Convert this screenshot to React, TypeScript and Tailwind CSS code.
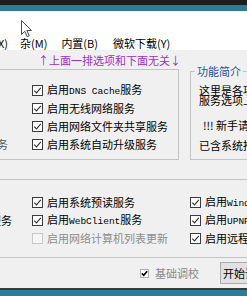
import React from 'react';

function Check({ on = true, disabled = false }: { on?: boolean; disabled?: boolean }) {
  return (
    <span
      className={`flex h-[11px] w-[11px] shrink-0 items-center justify-center border ${
        disabled ? 'border-[#c8c8c8] bg-[#f6f6f6]' : 'border-[#3c3c3c] bg-white'
      }`}
    >
      {on && (
        <svg width="9" height="9" viewBox="0 0 9 9">
          <path d="M1.3 4.7 L3.5 6.9 L7.8 1.9" fill="none" stroke="#333" strokeWidth="1.1" />
        </svg>
      )}
    </span>
  );
}

function Opt({ children, on = true, disabled = false }: { children: React.ReactNode; on?: boolean; disabled?: boolean }) {
  return (
    <div className="flex items-center gap-[4px] whitespace-nowrap">
      <Check on={on} disabled={disabled} />
      <span className={disabled ? 'text-[#8d8d8d]' : 'text-black'}>{children}</span>
    </div>
  );
}

// latin words inside the labels use a narrow mono face like the original
const M = ({ children }: { children: React.ReactNode }) => (
  <span className="font-['Liberation_Mono',monospace] text-[9.5px]">{children}</span>
);

// text whose start is cut off by the left edge of the window
const Cut = ({ w, children }: { w: string; children: React.ReactNode }) => (
  <div className={`flex shrink-0 justify-end overflow-hidden whitespace-nowrap ${w}`}>
    <span>{children}</span>
  </div>
);

export default function App() {
  return (
    <div className="flex h-[296px] w-[247px] flex-col overflow-hidden bg-[#f0f0f0] font-['Noto_Sans_CJK_SC',sans-serif] text-[11px] leading-[14px] text-black">
      {/* window frame */}
      <div className="h-[5px] shrink-0 bg-[#1e1e1e]" />
      <div className="h-[6px] shrink-0 bg-[#2c7c95]" />
      <div className="relative h-[25px] shrink-0 bg-white">
        <svg className="absolute left-[21px] top-[9px]" width="12" height="18" viewBox="0 0 12 18">
          <path
            d="M0.5 0.5 V14.5 L3.8 11.3 L6.2 16.8 L8.3 15.9 L5.9 10.5 H10.5 Z"
            fill="#fff"
            stroke="#4a4a4a"
            strokeWidth="1"
            strokeLinejoin="round"
          />
        </svg>
      </div>

      {/* menu */}
      <div className="flex h-[14px] shrink-0 items-center whitespace-nowrap bg-white">
        <Cut w="w-[8px]">(X)</Cut>
        <span className="ml-[12px]">杂(M)</span>
        <span className="ml-[14px]">内置(B)</span>
        <span className="ml-[15px]">微软下载(Y)</span>
      </div>

      <div className="flex h-[19px] shrink-0 items-center whitespace-nowrap pl-[38px] text-[#9b30c8]">
        ↑上面一排选项和下面无关↓
      </div>

      {/* upper groups */}
      <div className="flex shrink-0 items-start">
        <div className="-ml-[2px] h-[91px] w-[181px] shrink-0 border border-[#c4c4c4] pt-[11px]">
          <div className="flex h-[18px] items-center">
            <div className="w-[9px] shrink-0" />
            <div className="ml-[24px]">
              <Opt>启用<M>DNS Cache</M>服务</Opt>
            </div>
          </div>
          <div className="flex h-[18px] items-center">
            <div className="w-[9px] shrink-0" />
            <div className="ml-[24px]">
              <Opt>启用无线网络服务</Opt>
            </div>
          </div>
          <div className="flex h-[18px] items-center">
            <div className="w-[9px] shrink-0" />
            <div className="ml-[24px]">
              <Opt>启用网络文件夹共享服务</Opt>
            </div>
          </div>
          <div className="flex h-[18px] items-center">
            <Cut w="w-[9px] text-[#555]">打印服务</Cut>
            <div className="ml-[24px]">
              <Opt>启用系统自动升级服务</Opt>
            </div>
          </div>
        </div>

        <fieldset className="-mt-[5px] ml-[11px] h-[96px] w-[80px] min-w-0 shrink-0 border border-[#c4c4c4] pl-[4px]">
          <legend className="px-[2px] leading-[14px] text-[#1f52a3]">功能简介</legend>
          <div className="mt-[7px] whitespace-nowrap pl-[4px] leading-[10px]">
            <div>这里是各项功能的说明</div>
            <div>服务选项上停留查看</div>
          </div>
          <div className="mt-[13px] whitespace-nowrap pl-[8px]">!!! 新手请保持默认</div>
          <div className="mt-[6px] whitespace-nowrap pl-[4px]">已含系统推荐设置</div>
        </fieldset>
      </div>

      <div className="h-[19px] shrink-0" />

      {/* lower group */}
      <div className="-mx-[2px] h-[79px] shrink-0 border border-[#c4c4c4] pt-[13px]">
        <div className="flex h-[18px] items-center">
          <div className="w-[13px] shrink-0" />
          <div className="ml-[20px] w-[158px] shrink-0">
            <Opt>启用系统预读服务</Opt>
          </div>
          <Opt>启用<M>Windows Search</M>服务</Opt>
        </div>
        <div className="flex h-[18px] items-center">
          <Cut w="w-[13px]">启用打印服务</Cut>
          <div className="ml-[20px] w-[158px] shrink-0">
            <Opt>启用<M>WebClient</M>服务</Opt>
          </div>
          <Opt>启用<M>UPNP</M>设备服务</Opt>
        </div>
        <div className="flex h-[18px] items-center">
          <div className="w-[13px] shrink-0" />
          <div className="ml-[20px] w-[158px] shrink-0">
            <Opt on={false} disabled>
              启用网络计算机列表更新
            </Opt>
          </div>
          <Opt>启用远程桌面服务</Opt>
        </div>
      </div>

      {/* bottom bar */}
      <div className="flex h-[30px] shrink-0 items-center whitespace-nowrap pl-[140px]">
        <span className="flex h-[9px] w-[9px] shrink-0 items-center justify-center border border-[#b0b0b0] bg-white">
          <svg width="7" height="7" viewBox="0 0 7 7">
            <path d="M0.8 3.4 L2.7 5.3 L6.2 1.2" fill="none" stroke="#000" strokeWidth="1.6" />
          </svg>
        </span>
        <span className="ml-[6px] text-[#8a8a8a]">基础调校</span>
        <button className="ml-[21px] flex h-[22px] w-[70px] shrink-0 items-center border border-[#adadad] bg-[#e1e1e1] pl-[2px] text-black">
          开始调校
        </button>
      </div>

      <div className="h-[2px] shrink-0 bg-[#3a3a3a]" />
      <div className="h-[6px] shrink-0 bg-[#2c7c95]" />
    </div>
  );
}
